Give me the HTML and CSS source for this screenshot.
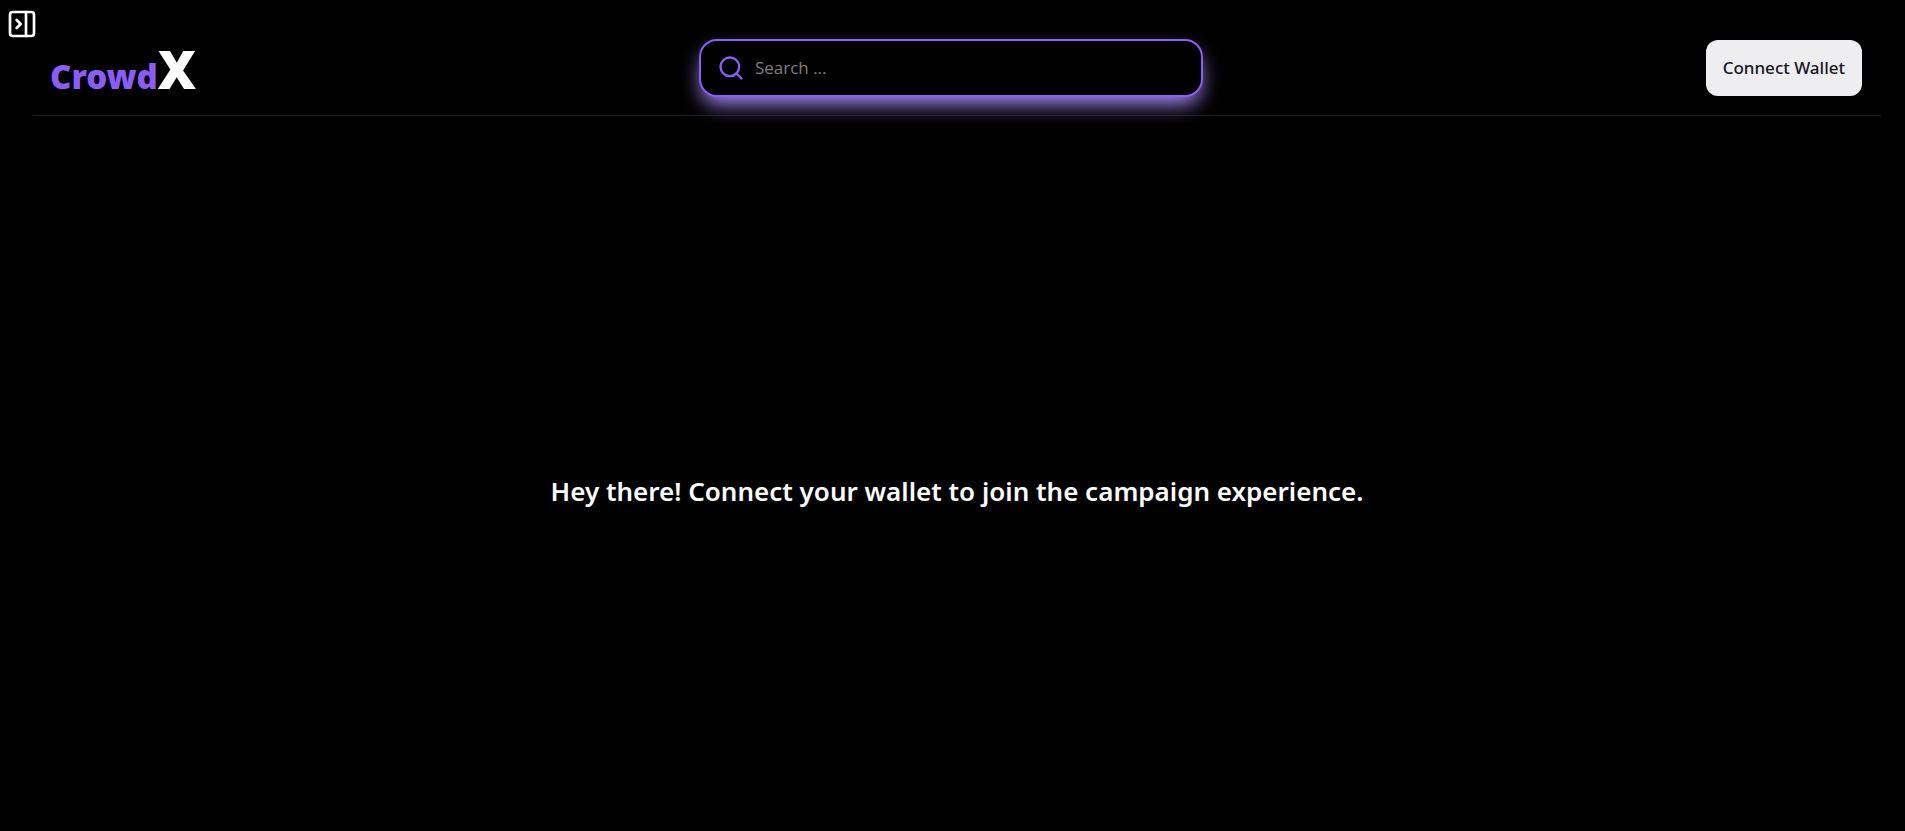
FILE: index.html
```html
<!DOCTYPE html>
<html lang="en">
<head>
  <meta charset="utf-8">
  <meta name="viewport" content="width=device-width, initial-scale=1">
  <title>CrowdX</title>
  <link rel="stylesheet" href="styles.css">
</head>
<body>
  <button class="sidebar-toggle" type="button" aria-label="Open sidebar">
    <svg class="sidebar-icon" viewBox="0 0 24 24" aria-hidden="true">
      <rect x="3" y="3" width="18" height="18" rx="2"/>
      <path d="M15 3v18M8 9l3 3-3 3"/>
    </svg>
  </button>
  <div class="page">
    <header class="header">
      <a class="logo" href="#"><span class="logo-name">Crowd</span><span class="logo-mark">X</span></a>
      <label class="search">
        <svg class="search-icon" viewBox="0 0 24 24" aria-hidden="true">
          <circle cx="11" cy="11" r="8"/>
          <path d="M21 21l-4.35-4.35"/>
        </svg>
        <input class="search-input" type="text" placeholder="Search ..." aria-label="Search">
      </label>
      <button class="connect" type="button">Connect Wallet</button>
    </header>
    <main class="main">
      <h1 class="message">Hey there! Connect your wallet to join the campaign experience.</h1>
    </main>
  </div>
</body>
</html>
```
FILE: styles.css
```css
* {
  box-sizing: border-box;
}

body {
  margin: 0;
  background: #000;
  color: #fff;
  font-family: "Segoe UI", "Noto Sans", "Open Sans", sans-serif;
}

.sidebar-toggle {
  position: absolute;
  top: 8px;
  left: 6px;
  padding: 0;
  border: 0;
  background: none;
  color: #fff;
  cursor: pointer;
}

.sidebar-icon {
  display: block;
  width: 32px;
  height: 32px;
  fill: none;
  stroke: currentColor;
  stroke-width: 2;
  stroke-linecap: round;
  stroke-linejoin: round;
}

.page {
  display: flex;
  flex-direction: column;
  min-height: 100vh;
  padding: 20px 24px 0 33px;
}

.header {
  display: flex;
  align-items: center;
  justify-content: space-between;
  gap: 24px;
  height: 96px;
  padding: 0 19px 0 17px;
  border-bottom: 1px solid #1c1c1f;
}

.logo {
  padding-top: 16px;
  color: #fff;
  font-weight: 900;
  line-height: 56px;
  text-decoration: none;
}

.logo-name {
  color: #8b5cf6;
  font-size: 33px;
}

.logo-mark {
  font-size: 53px;
}

.search {
  display: flex;
  flex: 0 1 504px;
  align-items: center;
  gap: 10px;
  height: 58px;
  padding: 0 16px;
  border: 2px solid #8b5cf6;
  border-radius: 18px;
  background: #000;
  box-shadow: 0 10px 20px -3px #a78bfa;
}

.search-icon {
  flex: none;
  width: 28px;
  height: 28px;
  fill: none;
  stroke: #8b5cf6;
  stroke-width: 2;
  stroke-linecap: round;
  stroke-linejoin: round;
}

.search-input {
  flex: 1;
  min-width: 0;
  padding: 0;
  border: 0;
  outline: 0;
  background: transparent;
  color: #fff;
  font: 400 17px/28px "Segoe UI", "Open Sans", "Noto Sans", sans-serif;
}

.search-input::placeholder {
  color: #7f7f7f;
  opacity: 1;
}

.connect {
  flex: none;
  height: 56px;
  padding: 0 17px;
  border: 0;
  border-radius: 12px;
  background: #eeeef0;
  color: #1a1523;
  font: 540 17px/24px "Segoe UI", "Noto Sans", "Open Sans", sans-serif;
  cursor: pointer;
}

.main {
  display: flex;
  flex: 1;
  align-items: center;
  justify-content: center;
  padding-top: 34px;
}

.message {
  margin: 0;
  font-size: 26px;
  font-weight: 640;
  line-height: 40px;
  text-align: center;
}
```
